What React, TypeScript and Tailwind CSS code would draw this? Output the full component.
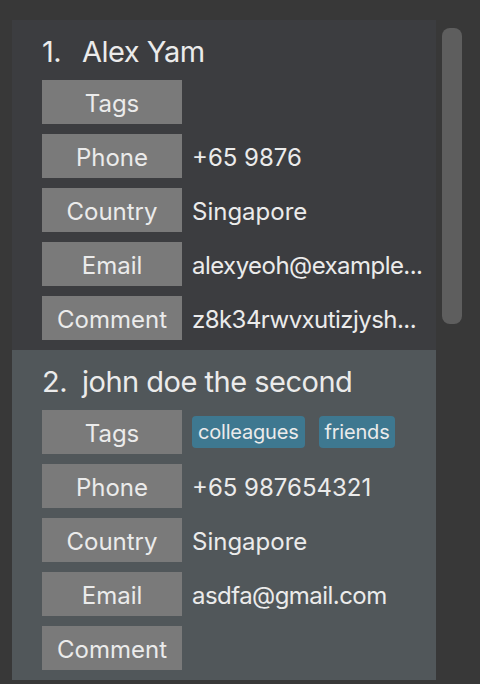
import React from "react";

type Person = {
  name: string;
  tags: string[];
  phone: string;
  country: string;
  email: string;
  comment: string;
};

const people: Person[] = [
  {
    name: "Alex Yam",
    tags: [],
    phone: "+65 9876",
    country: "Singapore",
    email: "alexyeoh@example...",
    comment: "z8k34rwvxutizjysh...",
  },
  {
    name: "john doe the second",
    tags: ["colleagues", "friends"],
    phone: "+65 987654321",
    country: "Singapore",
    email: "asdfa@gmail.com",
    comment: "",
  },
];

function Row({ label, children }: { label: string; children?: React.ReactNode }) {
  return (
    <div className="flex items-center h-[44px]">
      <div className="w-[140px] h-[44px] shrink-0 bg-[#7a7a7a] text-[#ebebeb] text-[24px] pt-[3px] flex items-center justify-center">
        {label}
      </div>
      <div className="ml-[10px] min-w-0 flex-1 flex items-center gap-[14px] text-[24px] text-[#ebebeb]">
        {children}
      </div>
    </div>
  );
}

function Card({ p, idx, bg }: { p: Person; idx: number; bg: string }) {
  return (
    <div className={`h-[330px] pl-[30px] pr-[8px] pt-[12px] ${bg}`}>
      <div className="h-[38px] mb-[10px] flex items-center text-[29px] text-[#ebebeb] leading-none whitespace-nowrap tracking-[-0.5px]">
        <span className="w-[40px] shrink-0">{`${idx}.`}</span>
        <span>{p.name}</span>
      </div>
      <div className="flex flex-col gap-[10px]">
        <Row label="Tags">
          {p.tags.map((t) => (
            <span
              key={t}
              className="h-[32px] px-[6px] flex items-center rounded-[4px] bg-[#3e7890] text-[20px] text-[#ebebeb] tracking-[-0.2px]"
            >
              {t}
            </span>
          ))}
        </Row>
        <Row label="Phone">
          <span className="whitespace-nowrap pt-[3px]">{p.phone}</span>
        </Row>
        <Row label="Country">
          <span className="whitespace-nowrap pt-[3px]">{p.country}</span>
        </Row>
        <Row label="Email">
          <span className="whitespace-nowrap pt-[3px] tracking-[-0.55px]">{p.email}</span>
        </Row>
        <Row label="Comment">
          <span className="whitespace-nowrap pt-[3px] tracking-[-0.55px]">{p.comment}</span>
        </Row>
      </div>
    </div>
  );
}

export default function App() {
  return (
    <div
      className="w-[480px] h-[684px] overflow-hidden bg-[#383838] flex pt-[20px] pl-[12px] gap-[6px]"
      style={{ fontFamily: "Inter, 'Noto Sans', sans-serif" }}
    >
      <div className="w-[424px] flex flex-col">
        <Card p={people[0]} idx={1} bg="bg-[#3c3d40]" />
        <Card p={people[1]} idx={2} bg="bg-[#51575a]" />
      </div>
      <div className="mt-[8px] w-[20px] h-[296px] rounded-[8px] bg-[#5e5e5e]" />
    </div>
  );
}
